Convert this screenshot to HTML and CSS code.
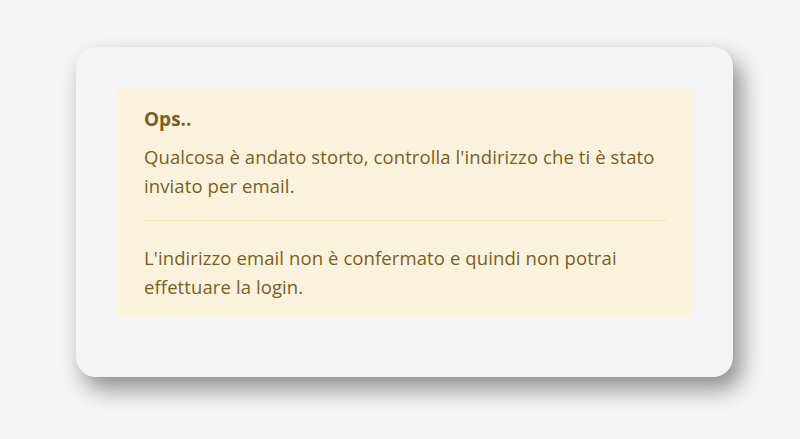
FILE: index.html
```html
<!DOCTYPE html>
<html lang="it">
<head>
<meta charset="utf-8">
<title>Ops..</title>
<link rel="stylesheet" href="styles.css">
</head>
<body>
<main class="page">
  <section class="card">
    <div class="alert">
      <h4 class="alert-title">Ops..</h4>
      <p class="alert-text">Qualcosa è andato storto, controlla l'indirizzo che ti è stato inviato per email.</p>
      <hr class="alert-divider">
      <p class="alert-text">L'indirizzo email non è confermato e quindi non potrai effettuare la login.</p>
    </div>
  </section>
</main>
</body>
</html>
```

FILE: styles.css
```css
* { box-sizing: border-box; }
html, body {
  margin: 0;
  padding: 0;
  background: #f3f4f6;
  height: 100%;
}
body {
  font-family: "Source Sans Pro", "Open Sans", "Noto Sans", sans-serif;
}
.page {
  padding: 47px 0 0 76px;
}
.card {
  width: 657px;
  background: #f3f4f6;
  border-radius: 20px;
  padding: 40px 39px 60px 40px;
  box-shadow: 8px 12px 22px rgba(0, 0, 0, 0.42);
}
.alert {
  background: #faf2dc;
  color: #7a5f25;
  border-radius: 4px;
  padding: 18px 28px 16px;
}
.alert-title {
  margin: 0 0 9px;
  font-size: 19px;
  font-weight: 700;
  line-height: 28px;
}
.alert-text {
  margin: 0;
  font-size: 18.5px;
  line-height: 29px;
  letter-spacing: 0.1px;
}
.alert-divider {
  border: 0;
  border-top: 1px solid #f1e3b6;
  margin: 20px 0 22px;
}
```
